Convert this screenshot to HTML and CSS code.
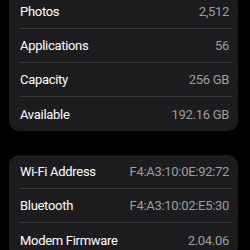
FILE: index.html
```html
<!DOCTYPE html>
<html lang="en">
<head>
  <meta charset="UTF-8">
  <meta name="viewport" content="width=device-width, initial-scale=1.0">
  <title>About</title>
  <link rel="stylesheet" href="styles.css">
</head>
<body>
  <div class="screen">
    <div class="group first">
      <div class="row"><span class="label">Photos</span><span class="value">2,512</span></div>
      <div class="row"><span class="label">Applications</span><span class="value">56</span></div>
      <div class="row"><span class="label">Capacity</span><span class="value">256 GB</span></div>
      <div class="row"><span class="label">Available</span><span class="value">192.16 GB</span></div>
    </div>

    <div class="group">
      <div class="row"><span class="label">Wi-Fi Address</span><span class="value">F4:A3:10:0E:92:72</span></div>
      <div class="row"><span class="label">Bluetooth</span><span class="value">F4:A3:10:02:E5:30</span></div>
      <div class="row"><span class="label">Modem Firmware</span><span class="value">2.04.06</span></div>
    </div>
  </div>
</body>
</html>
```

FILE: styles.css
```css
html, body {
  margin: 0;
  background: #000;
}
body {
  font-family: Roboto, "Liberation Sans", sans-serif;
  font-size: 13px;
  letter-spacing: -0.3px;
  -webkit-font-smoothing: antialiased;
}
.screen {
  padding: 0 12px 0 9px;
  display: flex;
  flex-direction: column;
  gap: 24px;
}
.group {
  background: #1c1c1e;
  border-radius: 10px;
  overflow: hidden;
}
.group.first {
  margin-top: -5px;
  border-radius: 0 0 10px 10px;
}
.row {
  height: 34px;
  margin: 0 6px 0 11px;
  padding-right: 3px;
  display: flex;
  align-items: center;
  justify-content: space-between;
  border-bottom: 1px solid #38383a;
  box-sizing: border-box;
}
.row:last-child {
  border-bottom: none;
}
.label {
  color: #fff;
}
.value {
  color: #9c9ca1;
}
```
